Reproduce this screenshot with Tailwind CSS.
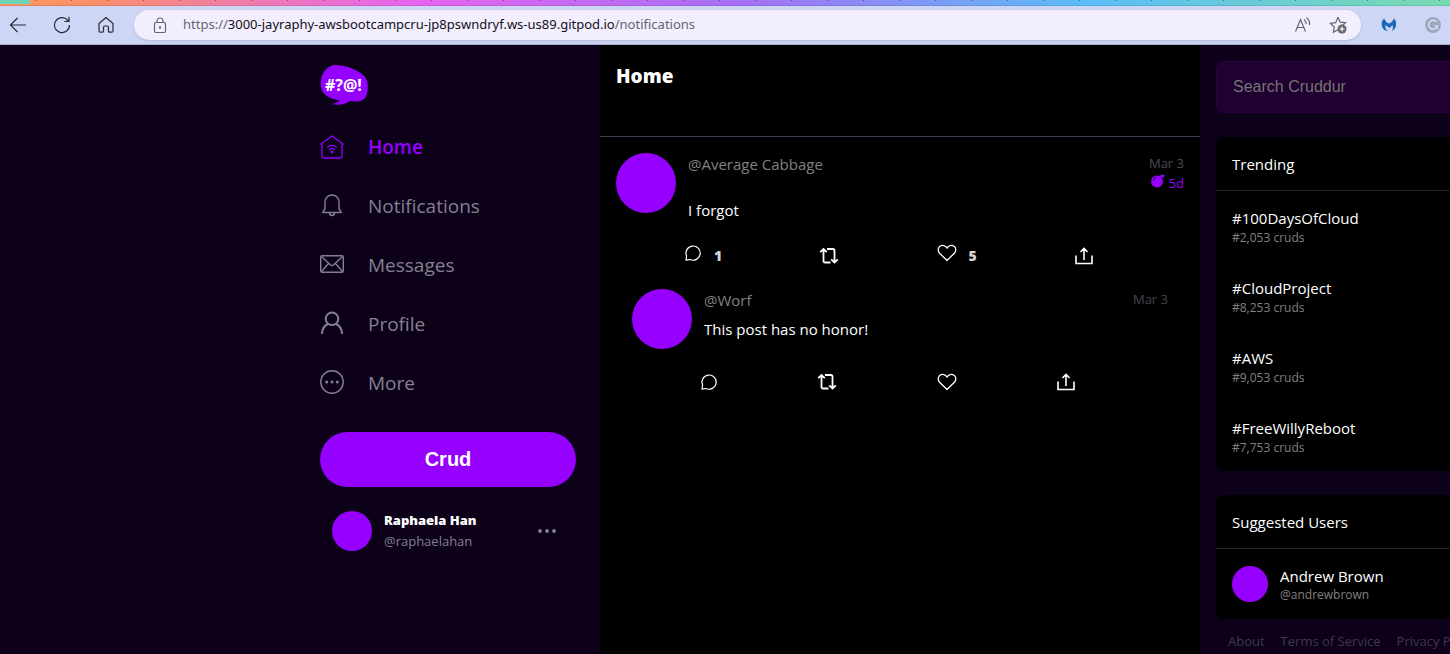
<!DOCTYPE html>
<html lang="en">
<head>
<meta charset="utf-8">
<meta name="viewport" content="width=device-width, initial-scale=1">
<title>Cruddur</title>
<script src="https://cdn.jsdelivr.net/npm/@tailwindcss/browser@4"></script>
</head>
<body class="flex h-screen flex-col overflow-hidden bg-[#0c0119] font-['Open_Sans','Noto_Sans',sans-serif] text-white">

<svg class="hidden" aria-hidden="true">
  <symbol id="comment" viewBox="0 0 18 18"><path d="M2 16.2 2.6 12A7.1 7.1 0 1 1 6 15.5Z" fill="none" stroke="currentColor" stroke-width="1.2" stroke-linejoin="round"/></symbol>
  <symbol id="repost" viewBox="0 0 20 18"><path d="M1.2 5.200 4.500 2l3.300 3.200M4.500 2.500v11.500a1.500 1.500 0 0 0 1.500 1.500h5.500M8 2h6a1.500 1.500 0 0 1 1.500 1.500v11.500M12.200 12.300l3.300 3.200 3.300-3.200" fill="none" stroke="currentColor" stroke-width="1.800"/></symbol>
  <symbol id="heart" viewBox="0 0 20 18"><path d="M10 16.500 2.600 9.200C.5 7 .9 3.700 3 2.300 5.300.7 8.500 1.500 10 4.100 11.500 1.500 14.700.7 17 2.300c2.100 1.400 2.500 4.700.4 6.900Z" fill="none" stroke="currentColor" stroke-width="1.300" stroke-linejoin="round"/></symbol>
  <symbol id="share" viewBox="0 0 20 18"><path d="M2 8.500v8h16v-8M10 13V2M6.500 5 10 1.500 13.500 5" fill="none" stroke="currentColor" stroke-width="1.600"/></symbol>
</svg>

<!-- Browser chrome -->
<div class="h-[6px] shrink-0 border-b border-black/10 bg-[linear-gradient(90deg,#fd9560_0%,#fa9168_6%,#e864ef_28%,#a66ff5_51%,#5cbdf8_75%,#76dab5_98%)]">
  <div class="h-px bg-[repeating-linear-gradient(90deg,transparent_0_35px,#0006_35px_36px)]">
    <div class="h-1 w-[30px] bg-[#6dd4b8]"></div>
  </div>
</div>
<header class="flex h-[39px] shrink-0 items-center border-b border-[#a6aecb] bg-[#cdd6f4] pl-[6px] text-[#2b2b35]">
  <button class="grid size-6 place-items-center" aria-label="Back"><svg class="h-[16px] w-[18px]" viewBox="0 0 18 16" fill="none" stroke="currentColor" stroke-width="1.200"><path d="M17 8H1.500M8.500 1l-7 7 7 7"/></svg></button>
  <button class="ml-5 grid size-6 place-items-center" aria-label="Refresh"><svg class="size-[18px]" viewBox="0 0 18 18" fill="none" stroke="currentColor" stroke-width="1.200"><path d="M16.500 9A7.500 7.500 0 1 1 14.500 4L16 5.500M16 .8v4.700h-4.700"/></svg></button>
  <button class="ml-5 grid size-6 place-items-center" aria-label="Browser home"><svg class="size-[18px]" viewBox="0 0 18 18" fill="none" stroke="currentColor" stroke-width="1.200" stroke-linejoin="round"><path d="M2 7.500 9 1.500l7 6V15a1.200 1.200 0 0 1-1.200 1.200h-2.300a1 1 0 0 1-1-1v-3.700a1.500 1.500 0 0 0-1.500-1.500h-2A1.500 1.500 0 0 0 6.500 11.500v3.700a1 1 0 0 1-1 1H3.200A1.200 1.200 0 0 1 2 15Z"/></svg></button>
  <div class="ml-4 flex h-[30px] min-w-0 flex-1 items-center rounded-full bg-[#f3eefe] pr-[14px] pl-[18px] text-[#65656d] shadow-sm">
    <svg class="h-[17px] w-[16px] shrink-0" viewBox="0 0 16 17" fill="none" stroke="currentColor" stroke-width="1.200"><rect x="2.500" y="5.500" width="11" height="10" rx="1.500"/><path d="M5 5.500V4a3 3 0 0 1 6 0v1.500"/><circle cx="8" cy="10.500" r=".6" fill="currentColor"/></svg>
    <div role="textbox" aria-label="Address" class="ml-[15px] flex-1 font-['Noto_Sans',sans-serif] text-[13px] whitespace-nowrap">https://<span class="text-[#111118]">3000-jayraphy-awsbootcampcru-jp8pswndryf.ws-us89.gitpod.io</span>/notifications</div>
    <button aria-label="Read aloud"><svg class="h-[16px] w-[18px]" viewBox="0 0 18 16" fill="none" stroke="currentColor" stroke-width="1.200"><path d="M1.500 14.500 6.500 2.500l5 12M3.200 10.500h6.600M10 2.500q2.200 1.500 2.200 4.500M12.500.8Q16 3 15.500 8"/></svg></button>
    <button class="ml-[17px]" aria-label="Add to favorites"><svg class="size-[18px]" viewBox="0 0 18 18"><path d="m9 1.200 2.200 5 5.300.6-4 3.600.5 2M9 13.700 4.300 16.300l1-5.300-3.900-3.600 5.300-.7L9 1.200" fill="none" stroke="currentColor" stroke-width="1.200"/><circle cx="13" cy="13" r="4.500" fill="currentColor"/><path d="M13 10.500v5M10.500 13h5" stroke="#fff" stroke-width="1.200"/></svg></button>
  </div>
  <button class="ml-5 shrink-0" aria-label="Malwarebytes extension"><svg class="h-[16px] w-[16px]" viewBox="0 0 16 16"><path d="M3.200 1.500C4.500 4.500 6 6 8 6.500c2-.5 3.500-2 4.800-5 2 1.500 2.800 4 2.200 7-.4 2.500-2 4.500-4 5.500.8-1.800 1.200-3.700.7-5.800L8.300 11 4.500 8c-.5 2.200.3 4.500 2.300 6.500C3 13.800 1 11 .7 8 .5 5 1.300 2.800 3.200 1.500Z" fill="#1c67b8"/></svg></button>
  <button class="mr-[9px] ml-7 shrink-0" aria-label="Grammarly extension"><svg class="size-[16px]" viewBox="0 0 16 16"><circle cx="8" cy="8" r="8" fill="#9fa7bd"/><path d="M11.500 4.700A4.500 4.500 0 1 0 12.500 9H9.500M12.500 9l-.5 3" fill="none" stroke="#d6ddf5" stroke-width="1.500"/></svg></button>
</header>

<div class="flex min-h-0 flex-1 overflow-hidden">
  <!-- Navigation -->
  <nav class="flex w-[600px] shrink-0 flex-col pr-6 pl-80 pt-5 text-[19px] text-[#84808d]">
    <svg class="h-[40px] w-[48px]" viewBox="0 0 48 40" role="img" aria-label="Cruddur"><path d="M15 0C24 0 33 3 40 7.500 45 11 48 15 47.800 21c0 7-1.500 12.500-6 14.500-3.500 1.500-8 .7-11.800.5-4 3.500-12 4.500-18.500 3 4-.5 6.500-1.500 8-3.700C10 34 1.500 30 .7 20.500 0 10 6 .8 15 0Z" fill="#9500ff"/><text x="5" y="26" font-family="Noto Sans" font-weight="700" font-size="16" fill="#fff">#?@!</text></svg>
    <a href="#" class="mt-[13px] flex h-[59px] items-center gap-6 font-semibold text-[#9500ff]"><svg class="mb-0.5 size-6" viewBox="0 0 24 24" fill="none" stroke="currentColor" stroke-width="1.300" stroke-linejoin="round"><path d="M.5 9.500 12 1l11.500 8.500M2 8.500v13a1.500 1.500 0 0 0 1.500 1.500h17a1.500 1.500 0 0 0 1.500-1.500v-13M7 12.500q5-4.200 10 0M9.200 14.700q2.800-2.300 5.600 0"/><circle cx="12" cy="17" r=".8" fill="currentColor"/></svg>Home</a>
    <a href="#" class="flex h-[59px] items-center gap-6"><svg class="mb-1 size-6" viewBox="0 0 24 24" fill="none" stroke="currentColor" stroke-width="1.400" stroke-linejoin="round"><path d="M3 19.500v-1l2-2.500V9a7 7 0 0 1 14 0v7l2 2.500v1ZM9.500 20a2.500 2.500 0 0 0 5 0"/></svg>Notifications</a>
    <a href="#" class="flex h-[59px] items-center gap-6"><svg class="mb-1 size-6" viewBox="0 0 24 24" fill="none" stroke="currentColor" stroke-width="1.400"><rect x=".7" y="3.700" width="22.600" height="16.600" rx="1.500"/><path d="m1.500 4.500 8.800 8.300q1.700 1.500 3.400 0l8.800-8.300M1.500 19.500l7-8M22.500 19.500l-7-8"/></svg>Messages</a>
    <a href="#" class="flex h-[59px] items-center gap-6"><svg class="mb-1 size-6" viewBox="0 0 24 24" fill="none" stroke="currentColor" stroke-width="2"><circle cx="12" cy="7.800" r="6.300"/><path d="M2 23c0-4.500 2.500-8.500 6-10M22 23c0-4.500-2.500-8.500-6-10"/></svg>Profile</a>
    <a href="#" class="flex h-[59px] items-center gap-6"><svg class="mb-1 size-6" viewBox="0 0 24 24" fill="none" stroke="currentColor" stroke-width="1.400"><circle cx="12" cy="12" r="11.200"/><g fill="currentColor" stroke="none"><circle cx="6.700" cy="12" r="1.500"/><circle cx="12" cy="12" r="1.500"/><circle cx="17.300" cy="12" r="1.500"/></g></svg>More</a>
    <button class="mt-[19px] h-[55px] rounded-full bg-[#9500ff] pb-0.5 font-['Liberation_Sans',sans-serif] text-xl font-bold text-white">Crud</button>
    <button class="mt-3 flex items-center px-3 py-[11px] text-left" aria-label="Account: Raphaela Han">
      <span class="size-10 rounded-full bg-[#9500ff]"></span>
      <span class="ml-3 flex flex-1 flex-col text-[13px] leading-[21px]"><span class="font-extrabold text-white">Raphaela Han</span><span>@raphaelahan</span></span>
      <svg class="mr-2 h-1 w-[18px]" viewBox="0 0 18 4" fill="currentColor"><circle cx="2" cy="2" r="1.900"/><circle cx="9" cy="2" r="1.900"/><circle cx="16" cy="2" r="1.900"/></svg>
    </button>
  </nav>

  <!-- Feed -->
  <main class="w-[600px] shrink-0 bg-black text-[15px]">
    <div class="h-[92px] border-b border-[#3c3b50] px-4 pt-[17px]"><h1 class="text-[19px] leading-7 font-extrabold">Home</h1></div>
    <article class="flex px-4 pt-4">
      <div class="size-[60px] shrink-0 rounded-full bg-[#9500ff]"></div>
      <div class="ml-3 flex-1">
        <div class="flex h-[46px] justify-between">
          <a href="#" class="leading-[22px] text-[#808080]">@Average Cabbage</a>
          <div class="text-right text-[13px] leading-5 text-[#4b4a54]"><time class="block">Mar 3</time><div class="flex items-center justify-end gap-1 text-[#9500ff]"><svg class="mb-1 size-[14px]" viewBox="0 0 14 14"><circle cx="6" cy="7.500" r="6" fill="currentColor"/><path d="M8.500 3.500 10.500 1.500h3M11 3l2-.5" fill="none" stroke="currentColor" stroke-width="1.600"/><path d="M2.500 6.500Q3 4 5 3.300" fill="none" stroke="#000" stroke-width=".8"/></svg>5d</div></div>
        </div>
        <p class="leading-[22px]">I forgot</p>
        <div class="-ml-1 mr-[90px] mt-[23px] flex h-6 items-center justify-between text-sm font-extrabold text-[#d5d5d5]">
          <button class="flex items-center gap-3" aria-label="Replies"><svg class="mb-1.5 size-[18px] text-white"><use href="#comment"/></svg>1</button>
          <button aria-label="Repost"><svg class="h-[18px] w-5 text-white"><use href="#repost"/></svg></button>
          <button class="flex items-center gap-3" aria-label="Likes"><svg class="mb-1.5 h-[18px] w-5 text-white"><use href="#heart"/></svg>5</button>
          <button aria-label="Share"><svg class="h-[18px] w-5 text-white"><use href="#share"/></svg></button>
        </div>
      </div>
    </article>
    <article class="mt-[21px] flex px-8">
      <div class="size-[60px] shrink-0 rounded-full bg-[#9500ff]"></div>
      <div class="ml-3 flex-1">
        <div class="flex h-[29px] justify-between">
          <a href="#" class="leading-[22px] text-[#808080]">@Worf</a>
          <time class="text-[13px] leading-5 text-[#45444f]">Mar 3</time>
        </div>
        <p class="leading-[22px]">This post has no honor!</p>
        <div class="-ml-1 mr-[92px] mt-[30px] flex h-6 items-center justify-between">
          <button aria-label="Reply"><svg class="size-[18px]"><use href="#comment"/></svg></button>
          <button aria-label="Repost"><svg class="h-[18px] w-5"><use href="#repost"/></svg></button>
          <button aria-label="Like"><svg class="h-[18px] w-5"><use href="#heart"/></svg></button>
          <button aria-label="Share"><svg class="h-[18px] w-5"><use href="#share"/></svg></button>
        </div>
      </div>
    </article>
  </main>

  <!-- Side column -->
  <aside class="w-[332px] shrink-0 px-4 pt-4 text-[15px]">
    <input type="search" aria-label="Search Cruddur" placeholder="Search Cruddur" class="h-[52px] w-full rounded-lg border border-[#2b0045] bg-[#1f0030] px-4 font-['Liberation_Sans',sans-serif] text-base placeholder:text-[#757575]">
    <section class="mt-6 rounded-lg bg-black">
      <h2 class="flex h-[54px] items-center border-b border-[#20222c] px-4 pt-px">Trending</h2>
      <a href="#" class="flex h-[70px] flex-col px-4 pt-4 leading-[22px]">#100DaysOfCloud<span class="text-xs leading-[18px] text-[#808080]">#2,053 cruds</span></a>
      <a href="#" class="flex h-[70px] flex-col px-4 pt-4 leading-[22px]">#CloudProject<span class="text-xs leading-[18px] text-[#808080]">#8,253 cruds</span></a>
      <a href="#" class="flex h-[70px] flex-col px-4 pt-4 leading-[22px]">#AWS<span class="text-xs leading-[18px] text-[#808080]">#9,053 cruds</span></a>
      <a href="#" class="flex h-[70px] flex-col px-4 pt-4 leading-[22px]">#FreeWillyReboot<span class="text-xs leading-[18px] text-[#808080]">#7,753 cruds</span></a>
    </section>
    <section class="mt-6 rounded-lg bg-black">
      <h2 class="flex h-[54px] items-center border-b border-[#20222c] px-4 pt-px">Suggested Users</h2>
      <a href="#" class="flex h-[70px] items-center gap-3 px-4 pb-px"><span class="size-9 rounded-full bg-[#9500ff]"></span><span class="flex flex-col leading-[22px]">Andrew Brown<span class="text-xs leading-4 text-[#808080]">@andrewbrown</span></span></a>
    </section>
    <footer class="mt-3 flex gap-4 px-3 text-[13px] leading-5 whitespace-nowrap text-[#40384a]"><a href="#">About</a><a href="#">Terms of Service</a><a href="#">Privacy Policy</a></footer>
  </aside>
</div>
</body>
</html>
